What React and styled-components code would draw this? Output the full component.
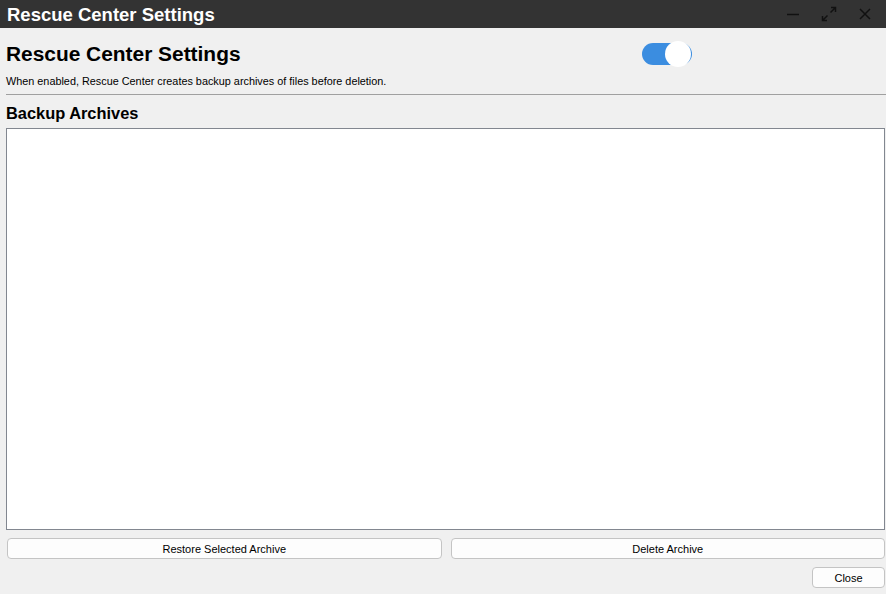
import React from "react";
import styled, { createGlobalStyle } from "styled-components";

const Global = createGlobalStyle`
  html, body { margin: 0; padding: 0; background: #f0f0f0; }
  body { font-family: "Liberation Sans", Arial, sans-serif; }
`;

const Window = styled.div`
  width: 886px;
  height: 594px;
  display: flex;
  flex-direction: column;
  background: #f0f0f0;
  overflow: hidden;
`;

const TitleBar = styled.div`
  height: 28px;
  flex: none;
  background: #333333;
  display: flex;
  align-items: center;
  padding: 0 3px 0 7px;
`;

const TitleText = styled.div`
  color: #ffffff;
  font-weight: bold;
  font-size: 18.5px;
  flex: 1;
  margin-top: 1px;
`;

const WinButtons = styled.div`
  display: flex;
  align-items: center;
  height: 28px;
`;

const WinBtn = styled.div`
  width: 36px;
  height: 28px;
  display: flex;
  align-items: center;
  justify-content: center;
`;

const Body = styled.div`
  flex: 1;
  display: flex;
  flex-direction: column;
  padding: 0 1px 0 6px;
`;

const Header = styled.div`
  display: grid;
  grid-template-columns: 636px auto;
  align-items: center;
  padding-top: 13px;
`;

const Heading = styled.h1`
  margin: 0;
  font-size: 20.9px;
  font-weight: bold;
  color: #000;
  line-height: 26px;
`;

const Track = styled.div`
  width: 50px;
  height: 22px;
  border-radius: 11px;
  background: #3b8de0;
  position: relative;
`;

const Knob = styled.div`
  position: absolute;
  width: 26px;
  height: 26px;
  border-radius: 50%;
  background: #ffffff;
  top: -2px;
  right: 1px;
`;

const Subtitle = styled.div`
  font-size: 10.85px;
  color: #000;
  margin-top: 8px;
  line-height: 13px;
`;

const Separator = styled.div`
  height: 1px;
  background: #a0a0a0;
  margin: 6px -1px 0 0;
`;

const SectionTitle = styled.h2`
  margin: 8px 0 0 0;
  font-size: 16.4px;
  font-weight: bold;
  line-height: 20px;
`;

const ListBox = styled.div`
  margin-top: 5px;
  height: 400px;
  background: #ffffff;
  border: 1px solid #828790;
`;

const ButtonRow = styled.div`
  display: grid;
  grid-template-columns: 1fr 1fr;
  gap: 9px;
  margin-top: 8px;
  padding-left: 1px;
`;

const Button = styled.button`
  height: 21px;
  width: ${(p) => (p.$w ? `${p.$w}px` : "auto")};
  background: #fdfdfd;
  border: 1px solid #c4c4c4;
  border-radius: 4px;
  font-family: "Liberation Sans", Arial, sans-serif;
  font-size: 11px;
  color: #000;
  padding: 0;
`;

const Footer = styled.div`
  display: flex;
  justify-content: flex-end;
  margin-top: 8px;
`;

export default function App() {
  return (
    <Window>
      <Global />
      <TitleBar>
        <TitleText>Rescue Center Settings</TitleText>
        <WinButtons>
          <WinBtn>
            <svg width="14" height="14" viewBox="0 0 14 14">
              <path d="M1 7.5h12" stroke="#111" strokeWidth="1.5" />
            </svg>
          </WinBtn>
          <WinBtn>
            <svg width="16" height="16" viewBox="0 0 16 16" fill="none" stroke="#111" strokeWidth="1.5">
              <path d="M9.5 6.5L14.5 1.5M10 1.5h4.5v4.5M6.5 9.5L1.5 14.5M1.5 10v4.5H6" />
            </svg>
          </WinBtn>
          <WinBtn>
            <svg width="12" height="12" viewBox="0 0 12 12" stroke="#111" strokeWidth="1.5">
              <path d="M1 1l10 10M11 1L1 11" />
            </svg>
          </WinBtn>
        </WinButtons>
      </TitleBar>
      <Body>
        <Header>
          <Heading>Rescue Center Settings</Heading>
          <Track>
            <Knob />
          </Track>
        </Header>
        <Subtitle>When enabled, Rescue Center creates backup archives of files before deletion.</Subtitle>
        <Separator />
        <SectionTitle>Backup Archives</SectionTitle>
        <ListBox />
        <ButtonRow>
          <Button>Restore Selected Archive</Button>
          <Button>Delete Archive</Button>
        </ButtonRow>
        <Footer>
          <Button $w={73}>Close</Button>
        </Footer>
      </Body>
    </Window>
  );
}
